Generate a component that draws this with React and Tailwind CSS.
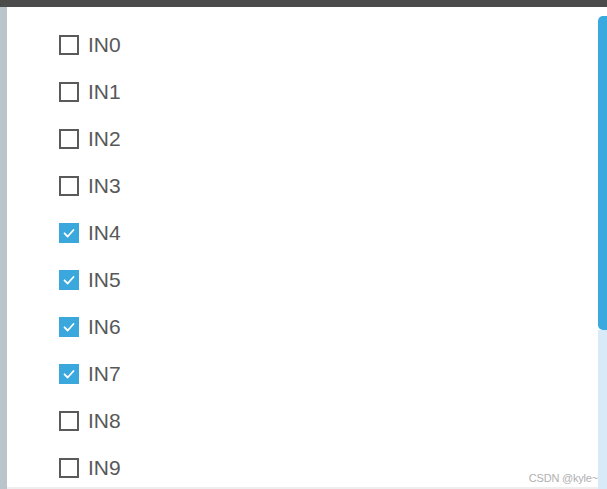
import React from "react";

const items = [
  { name: "IN0", on: false },
  { name: "IN1", on: false },
  { name: "IN2", on: false },
  { name: "IN3", on: false },
  { name: "IN4", on: true },
  { name: "IN5", on: true },
  { name: "IN6", on: true },
  { name: "IN7", on: true },
  { name: "IN8", on: false },
  { name: "IN9", on: false },
];

function Box({ on }) {
  if (on) {
    return (
      <span className="flex h-[20px] w-[20px] items-center justify-center bg-[#3aa8dc]">
        <svg width="14" height="14" viewBox="0 0 14 14" fill="none">
          <path d="M2.5 7.3l3.2 3.2 5.8-6.5" stroke="#fff" strokeWidth="1.8" strokeLinecap="round" strokeLinejoin="round" />
        </svg>
      </span>
    );
  }
  return <span className="block h-[20px] w-[20px] border-2 border-[#5a5a5a] bg-white" />;
}

export default function App() {
  return (
    <div className="flex h-[489px] w-[607px] flex-col overflow-hidden bg-white font-['Liberation_Sans',Arial,sans-serif]">
      <div className="h-[7px] shrink-0 bg-[#4b4b4b]" />
      <div className="flex min-h-0 flex-1">
        <div className="w-[7px] shrink-0 bg-[#b9c4cb]" />
        <div className="relative flex min-h-0 flex-1 flex-col overflow-hidden pt-[14px]">
          {items.map((it) => (
            <label key={it.name} className="flex h-[47px] shrink-0 items-center pl-[52px]">
              <Box on={it.on} />
              <span className="ml-[9px] text-[21px] leading-none text-[#585858]">{it.name}</span>
            </label>
          ))}
          <span className="absolute bottom-[5px] right-[0px] text-[11px] leading-none tracking-[-0.2px] text-[#b0b0b0]">CSDN @kyle~</span>
          <div className="absolute bottom-0 left-0 right-0 h-[2px] bg-[#eeeeee]" />
        </div>
        <div className="flex w-[9px] shrink-0 flex-col">
          <div className="h-[9px] shrink-0 bg-white" />
          <div className="h-[314px] shrink-0 rounded-l-[5px] bg-[#3aa9de]" />
          <div className="flex-1 bg-[#d8e9f7]" />
        </div>
      </div>
    </div>
  );
}
